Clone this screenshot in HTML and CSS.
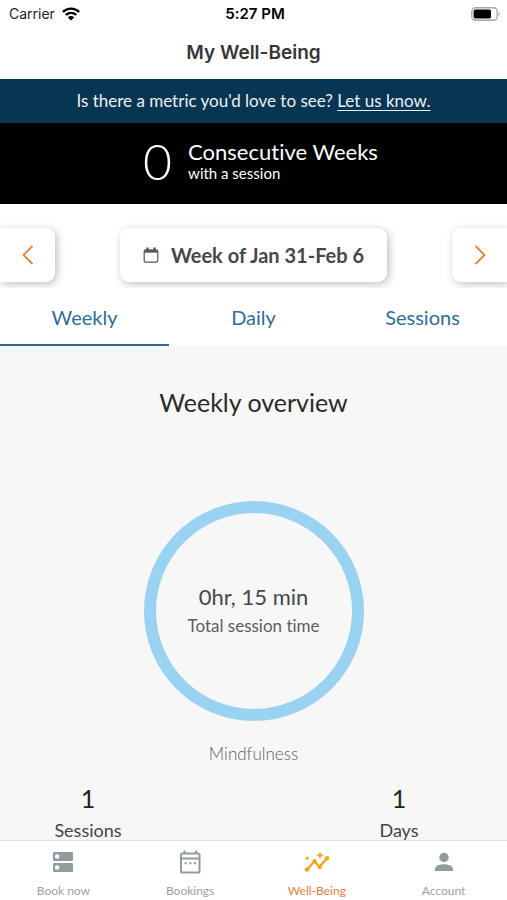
FILE: index.html
```html
<!DOCTYPE html>
<html lang="en">
<head>
    <meta charset="UTF-8">
    <meta name="viewport" content="width=device-width, initial-scale=1.0">
    <title>My Well-Being</title>
    <link rel="stylesheet" href="styles.css">
</head>
<body>

<div class="status-bar">
    <div class="carrier">
        <span>Carrier</span>
        <svg width="18" height="14" viewBox="0 0 18 14" fill="none" stroke="#000" stroke-width="2.4">
            <path d="M0.9 5A11.5 11.5 0 0 1 17.1 5"/>
            <path d="M3.8 8A7.4 7.4 0 0 1 14.2 8"/>
            <path d="M9 13.6L5.8 10.4A4.6 4.6 0 0 1 12.2 10.4Z" fill="#000" stroke="none"/>
        </svg>
    </div>
    <span class="clock">5:27 PM</span>
    <div class="battery">
        <svg width="30" height="14" viewBox="0 0 30 14">
            <rect x="0.8" y="0.8" width="25.4" height="12.4" rx="3.6" fill="#fff" stroke="#a8a8a8" stroke-width="1.4"/>
            <rect x="2.6" y="2.6" width="17.4" height="8.8" rx="1.6" fill="#000"/>
            <path d="M27.6 4.8A2.6 2.6 0 0 1 27.6 9.2Z" fill="#a8a8a8"/>
        </svg>
    </div>
</div>

<header class="title-bar">
    <h1>My Well-Being</h1>
</header>

<div class="banner">Is there a metric you'd love to see? <a href="#">Let us know.</a></div>

<div class="streak">
    <span class="streak-count">0</span>
    <div>
        <div class="streak-title">Consecutive Weeks</div>
        <div class="streak-note">with a session</div>
    </div>
</div>

<div class="week-picker">
    <button class="week-arrow prev" aria-label="Previous week">
        <svg width="12" height="20" viewBox="0 0 12 20" fill="none" stroke="#e58235" stroke-width="1.8">
            <path d="M10.5 1L1.5 10L10.5 19"/>
        </svg>
    </button>
    <button class="week-current">
        <svg width="16" height="16" viewBox="0 0 16 16" fill="none" stroke="#55585c">
            <rect x="1.2" y="2.8" width="13.6" height="12.4" rx="1.6" stroke-width="1.2"/>
            <path d="M1.2 4.4H14.8" stroke-width="2.6"/>
            <path d="M4.5 0.4V4M11.5 0.4V4" stroke-width="2.4"/>
        </svg>
        <span>Week of Jan 31-Feb 6</span>
    </button>
    <button class="week-arrow next" aria-label="Next week">
        <svg width="12" height="20" viewBox="0 0 12 20" fill="none" stroke="#e58235" stroke-width="1.8">
            <path d="M1.5 1L10.5 10L1.5 19"/>
        </svg>
    </button>
</div>

<nav class="tabs">
    <a href="#" class="tab active">Weekly</a>
    <a href="#" class="tab">Daily</a>
    <a href="#" class="tab">Sessions</a>
</nav>

<main class="overview">
    <h2>Weekly overview</h2>
    <div class="ring">
        <div class="ring-value">0hr, 15 min</div>
        <div class="ring-label">Total session time</div>
    </div>
    <div class="category">Mindfulness</div>
    <div class="stats">
        <div class="stat">
            <div class="stat-value">1</div>
            <div class="stat-label">Sessions</div>
        </div>
        <div class="stat">
            <div class="stat-value">1</div>
            <div class="stat-label">Days</div>
        </div>
    </div>
</main>

<nav class="bottom-nav">
    <a href="#" class="nav-item">
        <svg width="26" height="26" viewBox="0 0 26 26">
            <path fill="#929b9f" fill-rule="evenodd" d="M4 3H22Q23 3 23 4V11Q23 12 22 12H4Q3 12 3 11V4Q3 3 4 3ZM7.2 5.2A2.3 2.3 0 1 0 7.2 9.8A2.3 2.3 0 1 0 7.2 5.2ZM4 14H22Q23 14 23 15V22Q23 23 22 23H4Q3 23 3 22V15Q3 14 4 14ZM7.2 16.2A2.3 2.3 0 1 0 7.2 20.8A2.3 2.3 0 1 0 7.2 16.2Z"/>
        </svg>
        <span>Book now</span>
    </a>
    <a href="#" class="nav-item">
        <svg width="26" height="26" viewBox="0 0 26 26" fill="none" stroke="#929b9f" stroke-width="2">
            <rect x="4" y="4.5" width="18.5" height="19" rx="1.6"/>
            <path d="M4 9.5H22.5M7.5 1.5V5M19 1.5V5"/>
            <path d="M7.5 14.2H9.7M12.2 14.2H14.4M16.9 14.2H19.1"/>
        </svg>
        <span>Bookings</span>
    </a>
    <a href="#" class="nav-item active">
        <svg width="26" height="26" viewBox="0 0 26 26" fill="#f9a11b">
            <path d="M3 20.5L10.5 12.2L15.5 17.8L23 9.3" fill="none" stroke="#f9a11b" stroke-width="2.4"/>
            <circle cx="3" cy="20.5" r="2.3"/>
            <circle cx="10.5" cy="12" r="2.1"/>
            <circle cx="15.7" cy="18" r="2.2"/>
            <circle cx="23" cy="9.3" r="2.3"/>
            <path d="M16 2.6L17.1 5.3L19.8 6.4L17.1 7.5L16 10.2L14.9 7.5L12.2 6.4L14.9 5.3Z"/>
            <path d="M3.2 6.4L3.9 8.5L6 9.2L3.9 9.9L3.2 12L2.5 9.9L0.4 9.2L2.5 8.5Z"/>
        </svg>
        <span>Well-Being</span>
    </a>
    <a href="#" class="nav-item">
        <svg width="26" height="26" viewBox="0 0 26 26" fill="#929b9f">
            <circle cx="13" cy="8.5" r="4.7"/>
            <path d="M4 22V19.6C4 16.6 9.6 15.2 13 15.2S22 16.6 22 19.6V22Z"/>
        </svg>
        <span>Account</span>
    </a>
</nav>

</body>
</html>
```
FILE: styles.css
```css
* {
    box-sizing: border-box;
}

body {
    margin: 0;
    height: 100vh;
    display: flex;
    flex-direction: column;
    font-family: Lato, "Open Sans", sans-serif;
    font-variant-ligatures: none;
    background-color: #fff;
    color: #333;
    text-align: center;
}

a {
    color: inherit;
    text-decoration: none;
}

button {
    border: none;
    background-color: #fff;
    font-family: inherit;
    cursor: pointer;
}

svg {
    display: block;
}

.status-bar {
    display: grid;
    grid-template-columns: 1fr auto 1fr;
    align-items: center;
    height: 27px;
    padding: 0 6px 0 9px;
    font-family: Inter, sans-serif;
    font-size: 14px;
    color: #222;
}

.carrier {
    display: flex;
    align-items: center;
    gap: 7px;
}

.clock {
    font-size: 15px;
    font-weight: 600;
    color: #000;
}

.battery {
    justify-self: end;
}

.title-bar {
    height: 52px;
    line-height: 52px;
}

.title-bar h1 {
    margin: 0;
    font-family: Inter, sans-serif;
    font-size: 19px;
    font-weight: 600;
    color: #383536;
}

.banner {
    height: 44px;
    line-height: 44px;
    background-color: #083552;
    color: #e9f1f6;
    font-size: 17px;
}

.banner a {
    text-decoration: underline;
    text-underline-offset: 3px;
}

.streak {
    display: flex;
    justify-content: center;
    align-items: center;
    gap: 16px;
    height: 81px;
    padding-bottom: 6px;
    padding-left: 14px;
    background-color: #000;
    color: #fff;
    text-align: left;
}

.streak-count {
    font-size: 50px;
    line-height: 54px;
    font-weight: 300;
}

.streak-title {
    font-size: 22px;
    line-height: 24px;
}

.streak-note {
    font-size: 15px;
    line-height: 18px;
}

.week-picker {
    display: flex;
    justify-content: space-between;
    padding: 24px 0 6px;
    overflow: hidden;
}

.week-arrow,
.week-current {
    display: flex;
    justify-content: center;
    align-items: center;
    height: 54px;
    border-radius: 9px;
    box-shadow: 2px 2px 8px rgba(0, 0, 0, 0.26);
}

.week-arrow {
    width: 55px;
    padding: 0;
}

.prev {
    border-radius: 0 9px 9px 0;
}

.next {
    border-radius: 9px 0 0 9px;
}

.week-current {
    gap: 12px;
    padding: 0 23px;
    font-size: 20px;
    font-weight: 700;
    color: #45474c;
}

.tabs {
    display: flex;
    height: 58px;
}

.tab {
    flex: 1;
    border-bottom: 2px solid transparent;
    line-height: 58px;
    font-size: 20px;
    color: #2e6e99;
}

.tab.active {
    border-bottom-color: #2c6a94;
}

.overview {
    flex: 1;
    min-height: 0;
    overflow-y: auto;
    scrollbar-width: none;
    padding-top: 41px;
    background-color: #f7f7f7;
}

.overview h2 {
    margin: 0 0 84px;
    font-size: 25px;
    line-height: 30px;
    font-weight: 400;
    color: #2b2b2b;
}

.ring {
    display: flex;
    flex-direction: column;
    justify-content: center;
    width: 220px;
    height: 220px;
    margin: 0 auto 20px;
    padding-bottom: 2px;
    border: 12px solid #9ad2f1;
    border-radius: 50%;
}

.ring-value {
    font-size: 22px;
    line-height: 32px;
    color: #45474c;
}

.ring-label {
    font-size: 17px;
    line-height: 26px;
    color: #5c5e63;
}

.category {
    font-size: 17px;
    line-height: 26px;
    font-weight: 300;
    color: #606060;
}

.stats {
    display: flex;
    justify-content: space-between;
    padding: 14px 48px 0 28px;
}

.stat {
    width: 120px;
}

.stat-value {
    font-size: 25px;
    line-height: 34px;
    color: #222;
}

.stat-label {
    font-size: 18px;
    line-height: 30px;
    color: #444;
}

.bottom-nav {
    display: flex;
    height: 60px;
    border-top: 1px solid #dedede;
    background-color: #fff;
}

.nav-item {
    flex: 1;
    display: flex;
    flex-direction: column;
    align-items: center;
    gap: 7px;
    padding-top: 8px;
    font-size: 12px;
    line-height: 18px;
    color: #9a9fa2;
}

.nav-item.active {
    color: #e97c38;
}
```
